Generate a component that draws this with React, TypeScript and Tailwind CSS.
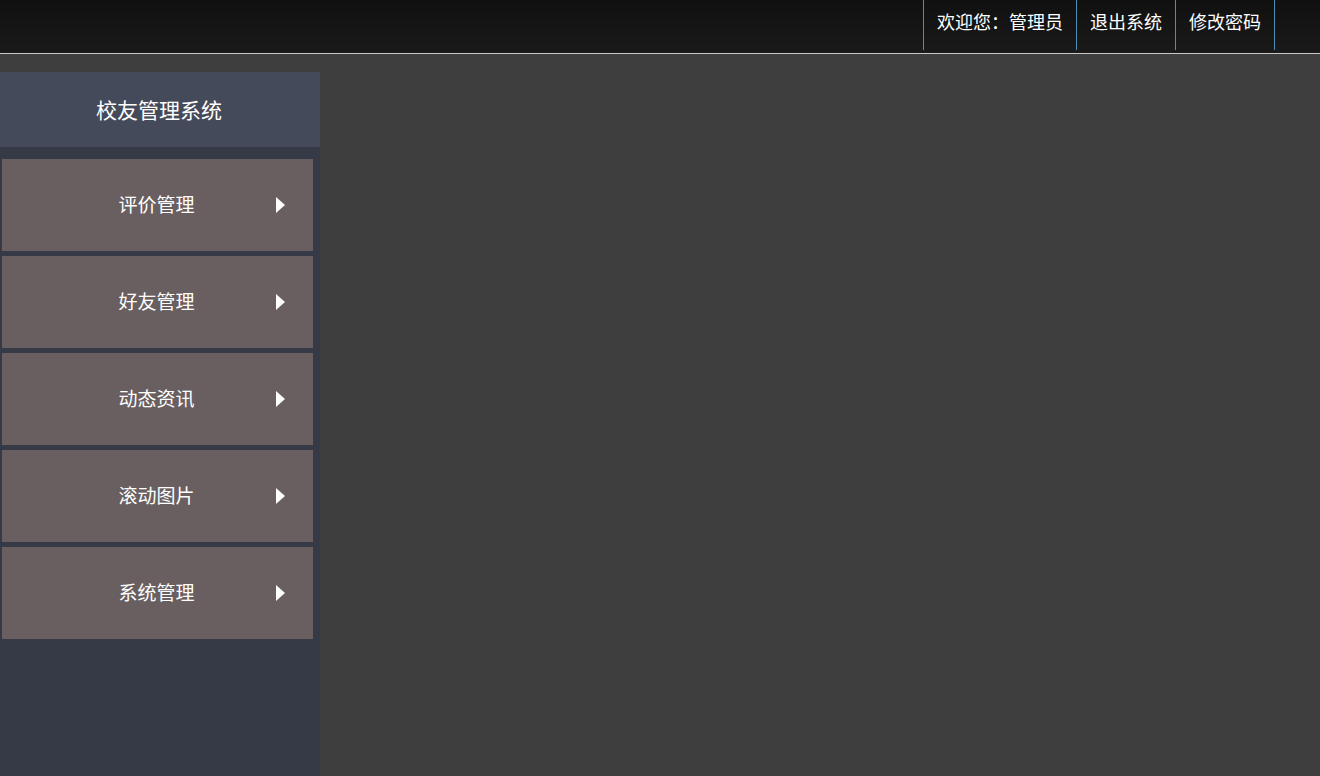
const menuItems = ['评价管理', '好友管理', '动态资讯', '滚动图片', '系统管理'];

const navLinks = ['欢迎您：管理员', '退出系统', '修改密码'];

const App = () => {
  return (
    <div
      className="flex h-[776px] flex-col overflow-hidden bg-[#3e3e3e] text-white"
      style={{ fontFamily: '"Noto Sans CJK SC", "Liberation Sans", sans-serif' }}
    >
      <header className="flex h-[54px] shrink-0 justify-end border-b border-[#c8c8c8] bg-gradient-to-b from-[#101010] to-[#1a1a1a] pr-[45px]">
        <ul className="flex h-[50px]">
          {navLinks.map((link, i) => (
            <li
              key={link}
              className={`flex items-center border-l border-[#4f8db3] px-[13px] pb-[8px] text-[18px] leading-none ${
                i === navLinks.length - 1 ? 'border-r' : ''
              }`}
            >
              {link}
            </li>
          ))}
        </ul>
      </header>

      <div className="mt-[18px] flex flex-1">
        <aside className="flex w-[320px] flex-col bg-[#363a47]">
          <div className="flex h-[75px] items-center justify-center bg-[#454a5a] pr-[2px] text-[21px]">
            校友管理系统
          </div>
          <nav className="flex flex-col gap-[5px] pt-[12px] pl-[2px] pr-[7px]">
            {menuItems.map((item) => (
              <a
                key={item}
                href="#"
                className="relative flex h-[92px] items-center justify-center bg-[#6a5f60] pb-[2px] text-[19px]"
              >
                <span className="pr-[2px]">{item}</span>
                <svg
                  className="absolute left-[272px] top-[37px]"
                  width="12"
                  height="18"
                  viewBox="0 0 12 18"
                >
                  <path d="M2 1 L11 9 L2 17 Z" fill="#ffffff" />
                </svg>
              </a>
            ))}
          </nav>
        </aside>
        <main className="flex-1" />
      </div>
    </div>
  );
};

export default App;
